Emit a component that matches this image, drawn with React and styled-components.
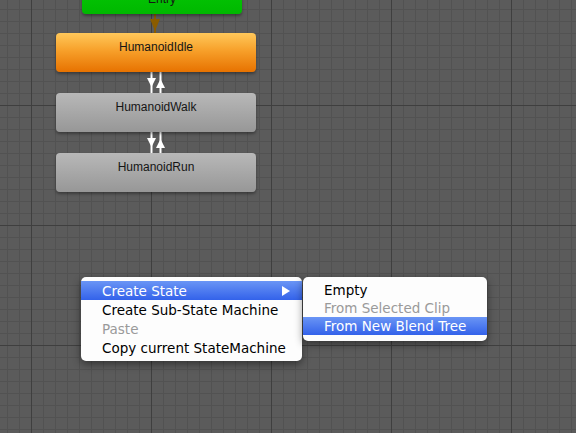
import styled, { createGlobalStyle } from "styled-components";

const Global = createGlobalStyle`
  html, body { margin: 0; padding: 0; }
  body { width: 576px; height: 433px; overflow: hidden; background: #5a5a5a; }
`;

const Canvas = styled.div`
  position: relative;
  width: 576px;
  height: 433px;
  overflow: hidden;
  background-color: #5b5b5b;
  background-image:
    linear-gradient(to right, #3f3f3f 1px, transparent 1px),
    linear-gradient(to bottom, #3f3f3f 1px, transparent 1px),
    linear-gradient(to right, #525252 1px, transparent 1px),
    linear-gradient(to bottom, #525252 1px, transparent 1px);
  background-size: 120px 120px, 120px 120px, 12px 12px, 12px 12px;
  background-position: 31px 0, 0 105px, 7px 0, 0 9px;
`;

// the state machine graph: nodes stacked with transition gaps
const Graph = styled.div`
  position: absolute;
  left: 56px;
  top: -15px;
  display: flex;
  flex-direction: column;
  align-items: flex-start;
  gap: 21px;
`;

const fills = {
  entry: "linear-gradient(#05c805, #00b800)",
  active: "linear-gradient(#ffc85a 0%, #f7a02a 45%, #e77200 100%)",
  idle: "linear-gradient(#b8b8b8, #979797)",
};

const Node = styled.div`
  width: ${(p) => (p.kind === "entry" ? 160 : 200)}px;
  height: ${(p) => (p.kind === "entry" ? 29 : 39)}px;
  margin-left: ${(p) => (p.kind === "entry" ? 26 : 0)}px;
  margin-bottom: ${(p) => (p.kind === "entry" ? -2 : 0)}px;
  box-sizing: border-box;
  padding-top: 7px;
  border-radius: 4px;
  background: ${(p) => fills[p.kind]};
  box-shadow: 0 2px 3px rgba(0, 0, 0, 0.35);
  color: #151515;
  font-family: "Liberation Sans", Arial, sans-serif;
  font-size: 12px;
  line-height: 14px;
  text-align: center;
`;

const Edges = styled.svg`
  position: absolute;
  left: 0;
  top: 0;
  pointer-events: none;
`;

const MenuGroup = styled.div`
  position: absolute;
  left: 81px;
  top: 277px;
  display: flex;
  align-items: flex-start;
`;

const Menu = styled.div`
  width: ${(p) => p.w}px;
  padding: 4px 0 ${(p) => p.pb}px;
  background: #fdfdfd;
  border-radius: 5px;
  box-shadow: 0 3px 9px rgba(0, 0, 0, 0.45);
  font-family: "DejaVu Sans", "Lucida Grande", sans-serif;
  font-size: 13.5px;
  & + & {
    margin-left: 1px;
  }
`;

const Item = styled.div`
  display: flex;
  align-items: center;
  justify-content: space-between;
  height: ${(p) => p.h}px;
  padding: 0 12px 0 21px;
  color: ${(p) => (p.selected ? "#ffffff" : p.disabled ? "#9a9a9a" : "#000000")};
  background: ${(p) => (p.selected ? "linear-gradient(#6a95f5, #3362ea)" : "transparent")};
  white-space: nowrap;
`;

function Connections() {
  return (
    <Edges width="576" height="433">
      <line x1="155" y1="14" x2="155" y2="33" stroke="#8a5c00" strokeWidth="2" />
      <polygon points="150,19 160,19 155,31" fill="#8a5c00" />

      <line x1="151.5" y1="72" x2="151.5" y2="93" stroke="#fff" strokeWidth="2" />
      <line x1="160.5" y1="72" x2="160.5" y2="93" stroke="#fff" strokeWidth="2" />
      <polygon points="147,78 156,78 151.5,87" fill="#fff" />
      <polygon points="156,88 165,88 160.5,79" fill="#fff" />

      <line x1="151.5" y1="132" x2="151.5" y2="153" stroke="#fff" strokeWidth="2" />
      <line x1="160.5" y1="132" x2="160.5" y2="153" stroke="#fff" strokeWidth="2" />
      <polygon points="147,138 156,138 151.5,147" fill="#fff" />
      <polygon points="156,148 165,148 160.5,139" fill="#fff" />
    </Edges>
  );
}

export default function App() {
  return (
    <Canvas>
      <Global />
      <Connections />
      <Graph>
        <Node kind="entry">Entry</Node>
        <Node kind="active">HumanoidIdle</Node>
        <Node kind="idle">HumanoidWalk</Node>
        <Node kind="idle">HumanoidRun</Node>
      </Graph>

      <MenuGroup>
        <Menu w={221} pb={4}>
          <Item h={19} selected>
            Create State
            <svg width="8" height="10" viewBox="0 0 8 10">
              <polygon points="0,0 8,5 0,10" fill="#fff" />
            </svg>
          </Item>
          <Item h={19}>Create Sub-State Machine</Item>
          <Item h={19} disabled>Paste</Item>
          <Item h={19}>Copy current StateMachine</Item>
        </Menu>
        <Menu w={184} pb={6}>
          <Item h={18}>Empty</Item>
          <Item h={18} disabled>From Selected Clip</Item>
          <Item h={18} selected>From New Blend Tree</Item>
        </Menu>
      </MenuGroup>
    </Canvas>
  );
}
